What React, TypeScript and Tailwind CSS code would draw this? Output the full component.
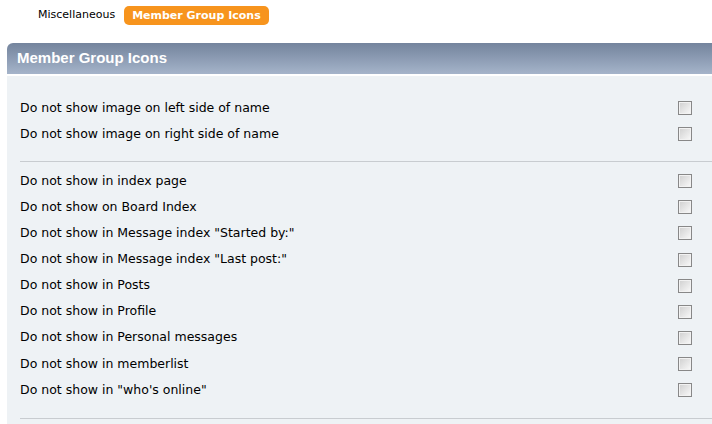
import React from "react";

const groupOne = [
  "Do not show image on left side of name",
  "Do not show image on right side of name",
];

const groupTwo = [
  "Do not show in index page",
  "Do not show on Board Index",
  'Do not show in Message index "Started by:"',
  'Do not show in Message index "Last post:"',
  "Do not show in Posts",
  "Do not show in Profile",
  "Do not show in Personal messages",
  "Do not show in memberlist",
  'Do not show in "who\'s online"',
];

function Box() {
  return (
    <span className="block w-[14px] h-[14px] border border-[#888] bg-gradient-to-br from-[#cfcfcf] to-[#fafafa] shadow-[inset_0_0_0_1px_#f2f2f2]" />
  );
}

function Row({ label }: { label: string }) {
  return (
    <div className="flex items-center justify-between h-[26.1px] pr-[20px]">
      <span>{label}</span>
      <Box />
    </div>
  );
}

export default function App() {
  return (
    <div className="w-[712px] h-[424px] overflow-hidden bg-white font-['DejaVu_Sans',Verdana,sans-serif] text-[12.5px] text-black">
      {/* tabs */}
      <div className="flex items-center h-[30px] pl-[38px] pt-[1px] gap-[9px] text-[11px]">
        <span>Miscellaneous</span>
        <span className="bg-[#f7941d] text-white font-bold rounded-[5px] px-[8px] h-[19px] leading-[19px]">
          Member Group Icons
        </span>
      </div>

      <div className="ml-[7px] mt-[13px]">
        {/* header */}
        <div className="h-[31px] rounded-tl-[6px] bg-gradient-to-b from-[#74849d] to-[#a5b4ca] text-white font-bold text-[15px] font-['Liberation_Sans',Arial,sans-serif] pl-[10px] flex items-center">
          Member Group Icons
        </div>
        <div className="h-[2px] bg-white" />

        {/* body */}
        <div className="bg-[#eef2f5] pl-[13px] pt-[19px] h-[400px]">
          {groupOne.map((l) => (
            <Row key={l} label={l} />
          ))}
          <div className="h-px bg-[#c8ccd0] mt-[14px] mb-[6px]" />
          {groupTwo.map((l) => (
            <Row key={l} label={l} />
          ))}
          <div className="h-px bg-[#c8ccd0] mt-[15px]" />
        </div>
      </div>
    </div>
  );
}
